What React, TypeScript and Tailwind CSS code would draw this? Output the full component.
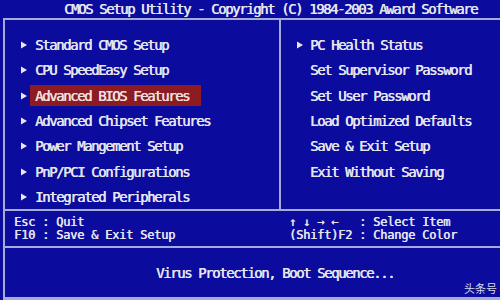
import React from "react";

const Tri = ({ show = true }: { show?: boolean }) => (
  <svg width="6" height="8" viewBox="0 0 6 8" className="shrink-0">
    {show && <polygon points="0,0.5 6,4 0,7.5" fill="#e8e8f0" />}
  </svg>
);

const leftItems = [
  "Standard CMOS Setup",
  "CPU SpeedEasy Setup",
  "Advanced BIOS Features",
  "Advanced Chipset Features",
  "Power Mangement Setup",
  "PnP/PCI Configurations",
  "Integrated Peripherals",
];

const rightItems: [string, boolean][] = [
  ["PC Health Status", true],
  ["Set Supervisor Password", false],
  ["Set User Password", false],
  ["Load Optimized Defaults", false],
  ["Save & Exit Setup", false],
  ["Exit Without Saving", false],
];

export default function App() {
  return (
    <div className="relative w-[500px] h-[300px] overflow-hidden bg-[#0b0b9e] text-[#e6e6ee] flex flex-col font-['DejaVu_Sans_Mono','Liberation_Mono',monospace] text-[14px] tracking-[-1.43px] leading-[14px] whitespace-pre [text-shadow:0.5px_0_0_#e6e6ee]">
      <div className="h-[18px] pl-[64px] flex items-center">
        CMOS Setup Utility - Copyright (C) 1984-2003 Award Software
      </div>
      <div className="ml-[3px] flex-1 flex flex-col border-l-2 border-t-2 border-b-[3px] border-[#a7abd8]">
        <div className="h-[189px] flex">
          <div className="w-[276px] border-r-2 border-[#a7abd8] pt-[14.5px] flex flex-col gap-[4.33px]">
            {leftItems.map((t, i) => (
              <div key={t} className="h-[21px] flex items-center pl-[16px]">
                <Tri />
                <div
                  className={
                    "ml-[3px] h-[21px] w-[171px] flex items-center pl-[5px] " +
                    (i === 2 ? "bg-[#8c1b22] text-[#f2dede]" : "")
                  }
                >
                  {t}
                </div>
              </div>
            ))}
          </div>
          <div className="flex-1 pt-[14.5px] flex flex-col gap-[4.33px]">
            {rightItems.map(([t, s]) => (
              <div key={t} className="h-[21px] flex items-center pl-[16px]">
                <Tri show={s} />
                <span className="ml-[7px]">{t}</span>
              </div>
            ))}
          </div>
        </div>
        <div className="h-[37px] border-t-2 border-[#a7abd8] pt-[4.5px] flex text-[12px] tracking-[-0.22px] leading-[13px]">
          <div className="w-[284px] pl-[9px] flex flex-col">
            <div>Esc : Quit</div>
            <div>F10 : Save &amp; Exit Setup</div>
          </div>
          <div className="flex flex-col">
            <div>↑ ↓ → ←   : Select Item</div>
            <div>(Shift)F2 : Change Color</div>
          </div>
        </div>
        <div className="flex-1 border-t-2 border-[#a7abd8] pt-[18px] pl-[151px]">
          Virus Protection, Boot Sequence...
        </div>
      </div>
      <div className="absolute right-[3px] bottom-[6px] font-['Noto_Sans_CJK_SC',sans-serif] text-[11px] leading-[11px] tracking-normal text-[#d8d8e8] [text-shadow:none]">
        头条号
      </div>
    </div>
  );
}
